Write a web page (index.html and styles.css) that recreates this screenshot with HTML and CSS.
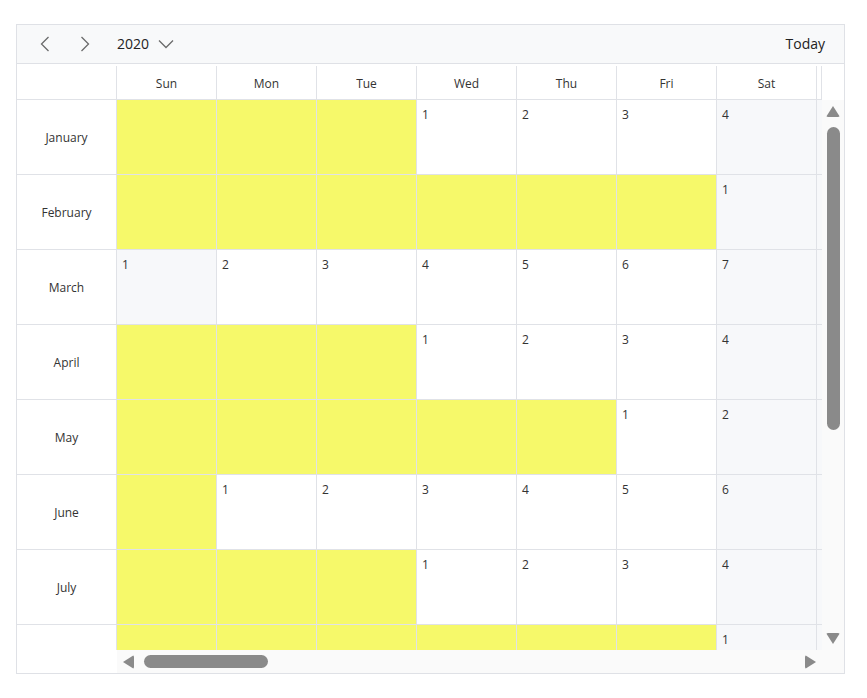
FILE: index.html
```html
<!DOCTYPE html>
<html>

<head>
    <title>Scheduler - Year</title>
    <link rel="stylesheet" href="styles.css">
</head>

<body>
    <div class="scheduler">
        <div class="toolbar">
            <button class="nav-btn" title="Previous">
                <svg width="10" height="16" viewBox="0 0 10 16"><path d="M8.5 1 L1.5 8 L8.5 15" /></svg>
            </button>
            <button class="nav-btn" title="Next">
                <svg width="10" height="16" viewBox="0 0 10 16"><path d="M1.5 1 L8.5 8 L1.5 15" /></svg>
            </button>
            <div class="year-picker">
                <span>2020</span>
                <svg width="16" height="10" viewBox="0 0 16 10"><path d="M1 1.5 L8 8.5 L15 1.5" /></svg>
            </div>
            <div class="spacer"></div>
            <button class="today-btn">Today</button>
        </div>

        <div class="view">
            <div class="head-blank"><div class="head-cell"></div></div>
            <div class="day-header">
                <div class="head-cell">Sun</div>
                <div class="head-cell">Mon</div>
                <div class="head-cell">Tue</div>
                <div class="head-cell">Wed</div>
                <div class="head-cell">Thu</div>
                <div class="head-cell">Fri</div>
                <div class="head-cell">Sat</div>
                <div class="head-cell filler"></div>
            </div>
            <div class="head-gutter"></div>

            <div class="months">
                <div class="month">January</div>
                <div class="month">February</div>
                <div class="month">March</div>
                <div class="month">April</div>
                <div class="month">May</div>
                <div class="month">June</div>
                <div class="month">July</div>
                <div class="month"></div>
            </div>

            <div class="content">
                <div class="row">
                    <div class="cell empty"></div>
                    <div class="cell empty"></div>
                    <div class="cell empty"></div>
                    <div class="cell">1</div>
                    <div class="cell">2</div>
                    <div class="cell">3</div>
                    <div class="cell weekend">4</div>
                    <div class="cell filler"></div>
                </div>
                <div class="row">
                    <div class="cell empty"></div>
                    <div class="cell empty"></div>
                    <div class="cell empty"></div>
                    <div class="cell empty"></div>
                    <div class="cell empty"></div>
                    <div class="cell empty"></div>
                    <div class="cell weekend">1</div>
                    <div class="cell filler"></div>
                </div>
                <div class="row">
                    <div class="cell weekend">1</div>
                    <div class="cell">2</div>
                    <div class="cell">3</div>
                    <div class="cell">4</div>
                    <div class="cell">5</div>
                    <div class="cell">6</div>
                    <div class="cell weekend">7</div>
                    <div class="cell filler"></div>
                </div>
                <div class="row">
                    <div class="cell empty"></div>
                    <div class="cell empty"></div>
                    <div class="cell empty"></div>
                    <div class="cell">1</div>
                    <div class="cell">2</div>
                    <div class="cell">3</div>
                    <div class="cell weekend">4</div>
                    <div class="cell filler"></div>
                </div>
                <div class="row">
                    <div class="cell empty"></div>
                    <div class="cell empty"></div>
                    <div class="cell empty"></div>
                    <div class="cell empty"></div>
                    <div class="cell empty"></div>
                    <div class="cell">1</div>
                    <div class="cell weekend">2</div>
                    <div class="cell filler"></div>
                </div>
                <div class="row">
                    <div class="cell empty"></div>
                    <div class="cell">1</div>
                    <div class="cell">2</div>
                    <div class="cell">3</div>
                    <div class="cell">4</div>
                    <div class="cell">5</div>
                    <div class="cell weekend">6</div>
                    <div class="cell filler"></div>
                </div>
                <div class="row">
                    <div class="cell empty"></div>
                    <div class="cell empty"></div>
                    <div class="cell empty"></div>
                    <div class="cell">1</div>
                    <div class="cell">2</div>
                    <div class="cell">3</div>
                    <div class="cell weekend">4</div>
                    <div class="cell filler"></div>
                </div>
                <div class="row">
                    <div class="cell empty"></div>
                    <div class="cell empty"></div>
                    <div class="cell empty"></div>
                    <div class="cell empty"></div>
                    <div class="cell empty"></div>
                    <div class="cell empty"></div>
                    <div class="cell weekend">1</div>
                    <div class="cell filler"></div>
                </div>
            </div>

            <div class="vscroll">
                <div class="arrow-up"></div>
                <div class="vthumb"></div>
                <div class="vspace"></div>
                <div class="arrow-down"></div>
            </div>

            <div class="bottom-blank"></div>
            <div class="hscroll">
                <div class="arrow-left"></div>
                <div class="hthumb"></div>
                <div class="hspace"></div>
                <div class="arrow-right"></div>
            </div>
            <div class="scroll-corner"></div>
        </div>
    </div>
</body>

</html>
```

FILE: styles.css
```css
body {
    font-family: "Open Sans", Arial, sans-serif;
    background-color: #fff;
    color: #333;
    margin: 0;
    padding: 0;
}

.scheduler {
    box-sizing: border-box;
    width: 829px;
    margin: 24px 0 0 16px;
    border: 1px solid #dfe1e6;
}

/* toolbar */

.toolbar {
    display: flex;
    align-items: center;
    height: 38px;
    padding: 0 19px 0 8px;
    background-color: #f8f9fa;
    border-bottom: 1px solid #dfe1e6;
}

.nav-btn {
    display: flex;
    align-items: center;
    justify-content: center;
    width: 40px;
    height: 38px;
    padding: 0;
    background: none;
    border: none;
    cursor: pointer;
}

.nav-btn path,
.year-picker path {
    fill: none;
    stroke: #6b6b6b;
    stroke-width: 1.3;
}

.year-picker {
    display: flex;
    align-items: center;
    gap: 9px;
    margin-left: 12px;
    font-size: 14px;
    color: #222;
    cursor: pointer;
}

.year-picker span {
    margin-top: -1px;
}

.spacer {
    flex: 1;
}

.today-btn {
    padding: 0 0 1px;
    background: none;
    border: none;
    font-family: inherit;
    font-size: 14px;
    color: #222;
    cursor: pointer;
}

/* view grid */

.view {
    display: grid;
    grid-template-columns: 100px 705px 22px;
    grid-template-rows: 36px 550px 23px;
    font-size: 12px;
}

.head-blank,
.day-header {
    display: flex;
    padding-top: 2px;
    box-sizing: border-box;
    border-bottom: 1px solid #e0e2e7;
}

.head-cell {
    box-sizing: border-box;
    width: 100px;
    display: flex;
    align-items: center;
    justify-content: center;
    padding-top: 1px;
    border-right: 1px solid #e0e2e7;
}

.head-cell.filler {
    width: 5px;
}

.months {
    overflow: hidden;
    border-right: 1px solid #e0e2e7;
}

.month {
    box-sizing: border-box;
    height: 75px;
    display: flex;
    align-items: center;
    justify-content: center;
    padding-top: 1px;
    border-bottom: 1px solid #e0e2e7;
}

.content {
    overflow: hidden;
}

.row {
    display: flex;
    height: 75px;
}

.cell {
    box-sizing: border-box;
    width: 100px;
    padding: 6px 0 0 5px;
    border-right: 1px solid #e0e2e7;
    border-bottom: 1px solid #e0e2e7;
    background-color: #fff;
}

.cell.weekend {
    background-color: #f7f8fa;
}

.cell.empty {
    background-color: #f6f96a;
}

.cell.filler {
    width: 5px;
    padding: 0;
    border-right: none;
    background-color: #f7f8fa;
}

/* scrollbars */

.vscroll {
    display: flex;
    flex-direction: column;
    align-items: center;
    padding: 6px 0;
    background-color: #fafafa;
}

.arrow-up {
    width: 0;
    height: 0;
    border-left: 7px solid transparent;
    border-right: 7px solid transparent;
    border-bottom: 11px solid #8a8a8a;
    border-radius: 2px;
}

.arrow-down {
    width: 0;
    height: 0;
    border-left: 7px solid transparent;
    border-right: 7px solid transparent;
    border-top: 11px solid #8a8a8a;
    border-radius: 2px;
}

.vthumb {
    width: 13px;
    height: 303px;
    margin-top: 10px;
    border-radius: 7px;
    background-color: #8a8a8a;
}

.vspace,
.hspace {
    flex: 1;
}

.bottom-blank {
    background-color: #fff;
}

.hscroll {
    display: flex;
    align-items: center;
    padding: 0 6px;
    background-color: #fafafa;
}

.arrow-left {
    width: 0;
    height: 0;
    border-top: 7px solid transparent;
    border-bottom: 7px solid transparent;
    border-right: 11px solid #8a8a8a;
    border-radius: 2px;
}

.arrow-right {
    width: 0;
    height: 0;
    border-top: 7px solid transparent;
    border-bottom: 7px solid transparent;
    border-left: 11px solid #8a8a8a;
    border-radius: 2px;
}

.hthumb {
    width: 124px;
    height: 13px;
    margin-left: 10px;
    border-radius: 7px;
    background-color: #8a8a8a;
}

.scroll-corner {
    background-color: #fafafa;
}
```
